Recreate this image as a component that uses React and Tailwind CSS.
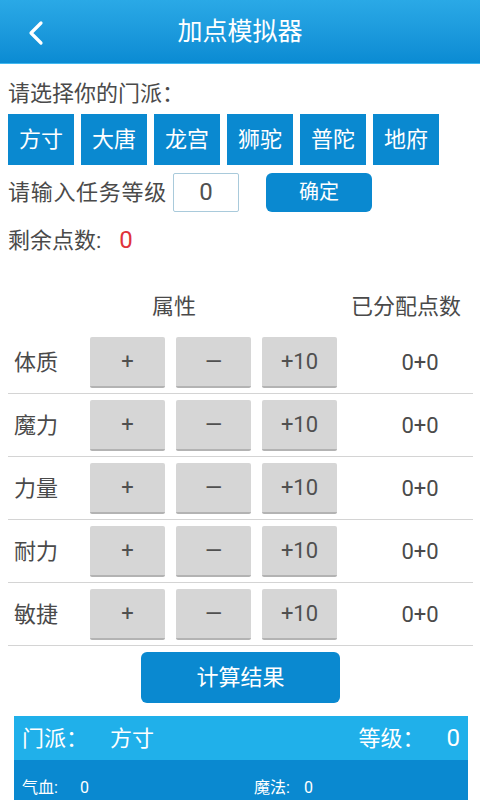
import React from "react";

const factions = ["方寸", "大唐", "龙宫", "狮驼", "普陀", "地府"];
const attrs = ["体质", "魔力", "力量", "耐力", "敏捷"];

export default function App() {
  return (
    <div
      className="w-[480px] h-[800px] overflow-hidden bg-white text-[#4a4a4a]"
      style={{ fontFamily: '"Roboto", "Noto Sans CJK SC", sans-serif' }}
    >
      <div className="relative h-[64px] flex items-center justify-center bg-gradient-to-b from-[#2aa9e6] to-[#0a8bd3] border-b border-[#40b8f0]">
        <svg className="absolute left-[26px] top-[20px]" width="20" height="26" viewBox="0 0 20 26">
          <path d="M15 3 L5 13 L15 23" fill="none" stroke="white" strokeWidth="3.2" strokeLinecap="round" strokeLinejoin="round" />
        </svg>
        <span className="text-white text-[25px]">加点模拟器</span>
      </div>

      <div className="px-[8px]">
        <div className="mt-[16px] h-[28px] leading-[28px] text-[22px]">请选择你的门派：</div>
        <div className="mt-[6px] flex gap-[7px]">
          {factions.map((f) => (
            <div key={f} className="w-[66px] h-[51px] bg-[#0a89d0] text-white text-[22px] flex items-center justify-center">
              {f}
            </div>
          ))}
        </div>
        <div className="mt-[7px] flex items-center h-[40px]">
          <span className="w-[157px] text-[22px] tracking-[0.7px] whitespace-nowrap">请输入任务等级</span>
          <div className="ml-[8px] w-[66px] h-[39px] border border-[#a9cadb] rounded-[2px] flex items-center justify-center text-[24px] text-[#505050]">
            0
          </div>
          <div className="ml-[27px] w-[106px] h-[39px] rounded-[6px] bg-[#0a89d0] text-white text-[20px] flex items-center justify-center">
            确定
          </div>
        </div>
        <div className="mt-[8px] h-[40px] flex items-center">
          <span className="text-[22px]">剩余点数:</span>
          <span className="ml-[18px] text-[24px] text-[#e0323a]">0</span>
        </div>

        <div className="mt-[21px] h-[50px] flex items-center text-[22px]">
          <div className="w-[332px] text-center">属性</div>
          <div className="flex-1 text-center">已分配点数</div>
        </div>

        <div className="w-[465px]">
          {attrs.map((a) => (
            <div key={a} className="h-[63px] border-b border-[#d4d4d4] flex items-center">
              <div className="w-[82px] pl-[6px] text-[22px]">{a}</div>
              <div className="flex gap-[11px]">
                {["+", "−", "+10"].map((b) => (
                  <div key={b} className="w-[75px] h-[51px] bg-[#d6d6d6] border-b-2 border-[#b3b3b3] rounded-[2px] flex items-center justify-center text-[22px] text-[#505050]">
                    {b === "−" ? "—" : b}
                  </div>
                ))}
              </div>
              <div className="flex-1 text-center text-[22px] pl-[30px]">0+0</div>
            </div>
          ))}
        </div>

        <div className="mt-[6px] flex justify-center pl-[1px]">
          <div className="w-[199px] h-[51px] rounded-[6px] bg-[#0a89d0] text-white text-[22px] flex items-center justify-center">
            计算结果
          </div>
        </div>

        <div className="mt-[13px] ml-[6px] w-[454px] h-[100px] bg-[#0a89d0]">
          <div className="h-[44px] bg-[#20b0ea] flex items-center text-white text-[22px] px-[8px]">
            <span>门派：</span>
            <span className="ml-[22px]">方寸</span>
            <span className="ml-auto">等级：</span>
            <span className="ml-[22px] text-[24px]">0</span>
          </div>
          <div className="mt-[19px] flex text-white text-[16px] leading-[18px] px-[8px]">
            <div className="w-[232px] flex">
              <span>气血:</span>
              <span className="ml-[22px]">0</span>
            </div>
            <div className="flex">
              <span>魔法:</span>
              <span className="ml-[14px]">0</span>
            </div>
          </div>
        </div>
      </div>
    </div>
  );
}
